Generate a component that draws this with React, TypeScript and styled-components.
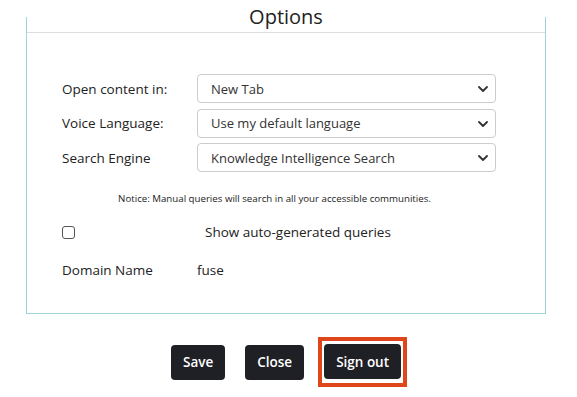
import React, { useState } from 'react';
import styled, { createGlobalStyle } from 'styled-components';

const GlobalStyle = createGlobalStyle`
  html, body {
    margin: 0;
    padding: 0;
    background: #ffffff;
  }
  body {
    font-family: "Open Sans", "Liberation Sans", sans-serif;
    color: #222;
  }
`;

// Options panel frame
const Panel = styled.section`
  display: flow-root;
  box-sizing: border-box;
  width: 520px;
  height: 297px;
  margin: 17px 0 0 26px;
  border: 1px solid #9fd3d9;
  border-top: none;
`;

const PanelHeader = styled.header`
  display: flow-root;
  height: 15px;
  border-bottom: 1px solid #dddddd;
  text-align: center;
`;

const Title = styled.h2`
  margin: -12px 0 0;
  font-size: 20px;
  line-height: 24px;
  font-weight: 400;
  color: #222;
`;

const PanelBody = styled.div`
  padding: 41px 48px 0 35px;
`;

const FormGrid = styled.div`
  display: grid;
  grid-template-columns: 135px 299px;
  row-gap: 5.5px;
  align-items: center;
`;

const Label = styled.label`
  font-size: 13.5px;
  color: #222;
`;

const SelectWrap = styled.div`
  position: relative;
  height: 29px;
`;

const Select = styled.select`
  box-sizing: border-box;
  width: 100%;
  height: 29px;
  appearance: none;
  -webkit-appearance: none;
  background: #fff;
  border: 1px solid #cccccc;
  border-radius: 4px;
  padding: 0 28px 0 13px;
  font-family: "Open Sans", "Liberation Sans", sans-serif;
  font-size: 13px;
  color: #333;
  outline: none;
`;

const Chevron = styled.svg`
  position: absolute;
  right: 8px;
  top: 12px;
  width: 10px;
  height: 6px;
  pointer-events: none;
`;

const Notice = styled.p`
  margin: 20px 0 0 -10px;
  text-align: center;
  font-size: 9.7px;
  color: #222;
`;

const CheckRow = styled.div`
  display: flex;
  align-items: center;
  margin-top: 17px;
  height: 20px;
`;

const Checkbox = styled.input`
  box-sizing: border-box;
  width: 13px;
  height: 13px;
  margin: 0;
  appearance: none;
  -webkit-appearance: none;
  border: 1px solid #555;
  border-radius: 3px;
  background: #fff;
`;

const CheckLabel = styled.label`
  margin-left: 130px;
  font-size: 13.5px;
  color: #222;
`;

const InfoRow = styled.div`
  display: grid;
  grid-template-columns: 135px 1fr;
  margin-top: 19px;
  font-size: 13.5px;
  color: #222;
`;

const Actions = styled.div`
  width: 520px;
  margin: 23px 0 0 26px;
  display: flex;
  align-items: center;
  justify-content: center;
  gap: 20px;
`;

// Square focus ring drawn around the active button
const FocusRing = styled.span`
  display: inline-flex;
  padding: 3px 2px 4px;
  margin: 0 -6px;
  border: 4px solid #e0461b;
`;

const Button = styled.button`
  height: 35px;
  padding: 0 12px;
  border: none;
  border-radius: 4px;
  background: #1f1f26;
  color: #fff;
  font-family: "Open Sans", "Liberation Sans", sans-serif;
  font-size: 13.5px;
  font-weight: 600;
  outline: none;
`;

const ChevronIcon = () => (
  <Chevron viewBox="0 0 10 6">
    <path d="M1 1 L5 5 L9 1" fill="none" stroke="#333" strokeWidth="1.8" strokeLinecap="round" strokeLinejoin="round" />
  </Chevron>
);

const options = [
  { label: 'Open content in:', value: 'New Tab' },
  { label: 'Voice Language:', value: 'Use my default language' },
  { label: 'Search Engine', value: 'Knowledge Intelligence Search' },
];

export default function App() {
  const [showAuto, setShowAuto] = useState(false);

  return (
    <>
      <GlobalStyle />
      <Panel>
        <PanelHeader>
          <Title>Options</Title>
        </PanelHeader>
        <PanelBody>
          <FormGrid>
            {options.map((opt) => (
              <React.Fragment key={opt.label}>
                <Label>{opt.label}</Label>
                <SelectWrap>
                  <Select defaultValue={opt.value}>
                    <option>{opt.value}</option>
                  </Select>
                  <ChevronIcon />
                </SelectWrap>
              </React.Fragment>
            ))}
          </FormGrid>
          <Notice>Notice: Manual queries will search in all your accessible communities.</Notice>
          <CheckRow>
            <Checkbox type="checkbox" checked={showAuto} onChange={() => setShowAuto(!showAuto)} />
            <CheckLabel>Show auto-generated queries</CheckLabel>
          </CheckRow>
          <InfoRow>
            <span>Domain Name</span>
            <span>fuse</span>
          </InfoRow>
        </PanelBody>
      </Panel>
      <Actions>
        <Button>Save</Button>
        <Button>Close</Button>
        <FocusRing>
          <Button>Sign out</Button>
        </FocusRing>
      </Actions>
    </>
  );
}
